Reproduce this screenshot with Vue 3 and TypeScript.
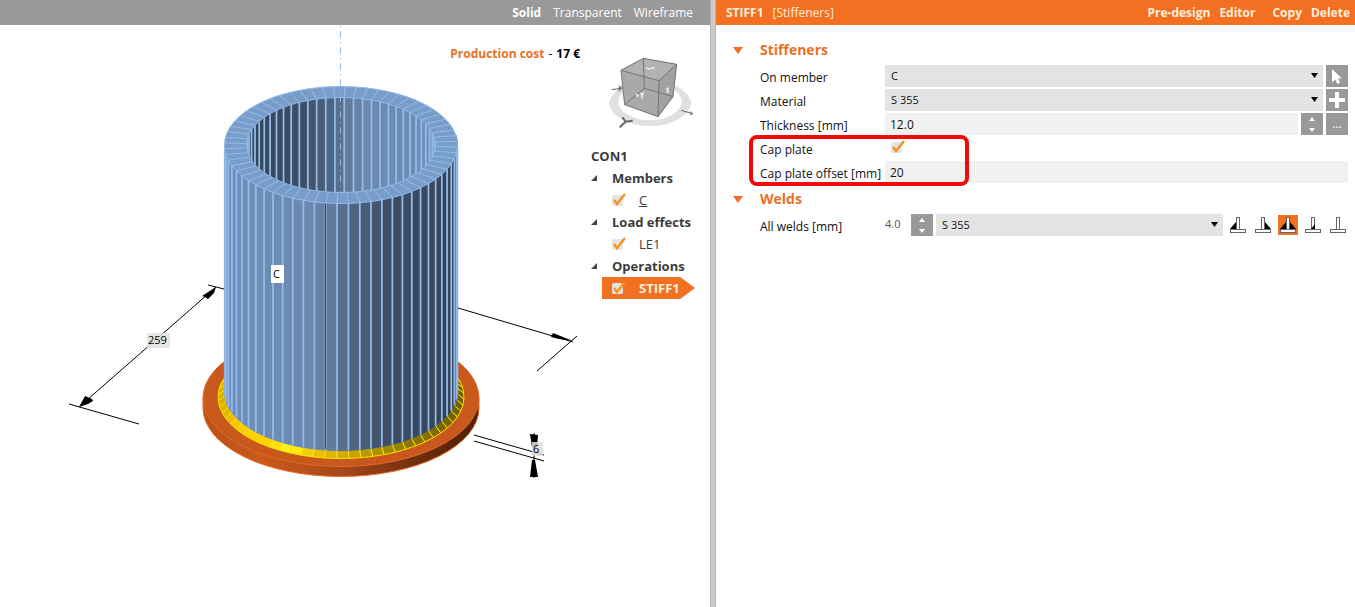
<script setup lang="ts">
import { ref } from 'vue'

type Rgb = [number, number, number]
type Stop = [number, Rgb]

const TAU = Math.PI * 2
const SEGMENTS = 64
const PHASE = -0.034
const CX = 341

const outerTop = { rx: 116.5, ry: 58.5, cy: 145 }
const innerTop = { rx: 94.5, ry: 47.5, cy: 145 }
const outerBottom = { rx: 116.5, ry: 58.5, cy: 392 }
const weldOuter = { rx: 123, ry: 61.5, cy: 397 }

const steel: Stop[] = [
  [-1, [108, 143, 186]],
  [-0.3, [108, 138, 176]],
  [-0.08, [98, 123, 156]],
  [0.1, [79, 101, 130]],
  [0.4, [62, 79, 101]],
  [1, [50, 65, 86]],
]
const weldTone: Stop[] = [
  [-1, [214, 176, 0]],
  [-0.85, [250, 204, 0]],
  [-0.6, [255, 212, 0]],
  [-0.42, [255, 250, 32]],
  [-0.25, [240, 200, 8]],
  [0, [212, 172, 0]],
  [0.3, [172, 146, 0]],
  [0.6, [138, 118, 0]],
  [1, [110, 94, 0]],
]

function tone(stops: Stop[], t: number): string {
  let i = 0
  while (i < stops.length - 2 && t > stops[i + 1][0]) i++
  const [a, ca] = stops[i]
  const [b, cb] = stops[i + 1]
  const k = Math.min(1, Math.max(0, (t - a) / (b - a)))
  return `rgb(${ca.map((c, n) => Math.round(c + (cb[n] - c) * k)).join(',')})`
}

type Ring = { rx: number; ry: number; cy: number }
const at = (r: Ring, a: number) => ({ x: CX + r.rx * Math.sin(a), y: r.cy + r.ry * Math.cos(a) })
const fmt = (p: { x: number; y: number }) => `${p.x.toFixed(1)},${p.y.toFixed(1)}`

const angles = Array.from({ length: SEGMENTS }, (_, k) => PHASE + (k * TAU) / SEGMENTS)

const frontFaces = angles
  .filter((a) => Math.cos(a) > -0.12)
  .map((a) => {
    const b = a + TAU / SEGMENTS
    const p = [at(outerTop, a), at(outerTop, b), at(outerBottom, b), at(outerBottom, a)]
    return { points: p.map(fmt).join(' '), fill: tone(steel, Math.sin((a + b) / 2)) }
  })
const frontLines = angles
  .filter((a) => Math.cos(a) > 0)
  .map((a) => ({ x: at(outerTop, a).x, y1: at(outerTop, a).y, y2: at(outerBottom, a).y }))

const backFaces = angles
  .filter((a) => Math.cos(a) < 0.12)
  .map((a) => {
    const b = a + TAU / SEGMENTS
    const p = [at(innerTop, a), at(innerTop, b)]
    return {
      points: `${fmt(p[0])} ${fmt(p[1])} ${p[1].x.toFixed(1)},200 ${p[0].x.toFixed(1)},200`,
      fill: tone(steel, -Math.sin((a + b) / 2)),
    }
  })
const backLines = angles.filter((a) => Math.cos(a) < 0).map((a) => at(innerTop, a))

const rimLines = angles.map((a) => ({ a: at(outerTop, a), b: at(innerTop, a) }))

const weldFaces = angles
  .filter((a) => Math.cos(a) > -0.35)
  .map((a) => {
    const b = a + TAU / SEGMENTS
    const p = [at(weldOuter, a), at(weldOuter, b), at(outerBottom, b), at(outerBottom, a)]
    return { points: p.map(fmt).join(' '), fill: tone(weldTone, Math.sin((a + b) / 2)) }
  })

const viewModes = ['Solid', 'Transparent', 'Wireframe']
const viewMode = ref('Solid')

const tree = ref([
  { title: 'Members', item: 'C', on: true, underline: true, active: false },
  { title: 'Load effects', item: 'LE1', on: true, underline: false, active: false },
  { title: 'Operations', item: 'STIFF1', on: true, underline: false, active: true },
])

const member = ref('C')
const material = ref('S 355')
const thickness = ref('12.0')
const capPlate = ref(true)
const capOffset = ref('20')
const weldSize = ref('4.0')
const weldMaterial = ref('S 355')

const weldTypes = [
  { name: 'Fillet left', shapes: ['8,7 8,14 2,14'] },
  { name: 'Fillet right', shapes: ['12,7 12,14 18,14'] },
  { name: 'Fillet both sides', shapes: ['8,7 8,14 2,14', '12,7 12,14 18,14'] },
  { name: 'Bevel', shapes: ['12,9 12,14 8,14'] },
  { name: 'Butt', shapes: [] },
]
const weldType = ref(2)

function step(target: 'thickness' | 'weld', delta: number) {
  const model = target === 'thickness' ? thickness : weldSize
  model.value = (Number(model.value) + delta).toFixed(1)
}
</script>

<template>
  <div class="app">
    <section class="scene">
      <nav class="bar modes">
        <button
          v-for="mode in viewModes"
          :key="mode"
          type="button"
          :class="{ current: mode === viewMode }"
          @click="viewMode = mode"
        >{{ mode }}</button>
      </nav>

      <div class="viewport">
        <svg class="model" viewBox="0 25 710 582" preserveAspectRatio="xMidYMin meet">
          <defs>
            <linearGradient id="plateSide" x1="0" x2="1" y1="0" y2="0">
              <stop offset="0" stop-color="#b9501a" />
              <stop offset="0.22" stop-color="#cb5a1c" />
              <stop offset="0.5" stop-color="#a6481a" />
              <stop offset="0.8" stop-color="#6b2c0c" />
              <stop offset="1" stop-color="#4d1e06" />
            </linearGradient>
            <clipPath id="bore"><ellipse cx="341" cy="145" rx="94.5" ry="47.5" /></clipPath>
          </defs>

          <!-- base plate -->
          <path d="M203 398v10a138 68.500 0 0 0 276 0v-10z" fill="url(#plateSide)" stroke="#ea6824" />
          <ellipse cx="341" cy="398" rx="138" ry="68.500" fill="#c8581c" stroke="#e56724" />

          <!-- weld bead -->
          <polygon v-for="(f, i) in weldFaces" :key="'w' + i" :points="f.points" :fill="f.fill" stroke="#ffe000" />

          <!-- tube shell -->
          <polygon v-for="(f, i) in frontFaces" :key="'f' + i" :points="f.points" :fill="f.fill" :stroke="f.fill" />
          <line
            v-for="(l, i) in frontLines" :key="'fl' + i"
            :x1="l.x" :x2="l.x" :y1="l.y1" :y2="l.y2" stroke="#93bae9" stroke-width="1.800"
          />
          <path d="M325.500 202V449" stroke="#2f4a68" />
          <path d="M224.500 145V393M457.500 145V393" stroke="#8db4e4" />

          <!-- rim and bore -->
          <ellipse cx="341" cy="145" rx="116.500" ry="58.500" fill="#789dc9" stroke="#93bae9" />
          <line
            v-for="(l, i) in rimLines" :key="'r' + i"
            :x1="l.a.x" :y1="l.a.y" :x2="l.b.x" :y2="l.b.y" stroke="#93bae9"
          />
          <g clip-path="url(#bore)">
            <polygon v-for="(f, i) in backFaces" :key="'b' + i" :points="f.points" :fill="f.fill" :stroke="f.fill" />
            <line
              v-for="(p, i) in backLines" :key="'bl' + i"
              :x1="p.x" :x2="p.x" :y1="p.y" y2="200" stroke="#93bae9" stroke-width="1.800"
            />
          </g>
          <ellipse cx="341" cy="145" rx="94.500" ry="47.500" fill="none" stroke="#93bae9" />
          <path d="M340.500 25V192" stroke="#93b7de" stroke-dasharray="7 4 1 4" stroke-dashoffset="10" />

          <!-- dimensions -->
          <g stroke="#000" fill="#000">
            <path d="M79 407L216 287M208 285l16 4M69 404l70 20M458 308l115 34M577 336l-40 35M474 435l70 20M474 441l70 20M534 433v45" fill="none" />
            <path d="M79 407l6-11 7 3 1 2-5 3zM216 287l-14 9 3 1 3 2 6-6zM573 341l-20-8-2 4 8 2zM530 434l8 1-1 12h-5zM532 460h3l3 17h-8z" stroke="none" />
          </g>
          <rect x="147" y="333" width="23" height="15" fill="#e2e2e2" fill-opacity="0.850" />
          <text x="148" y="344" class="dim">259</text>
          <rect x="532" y="442" width="11" height="14" fill="#dedede" fill-opacity="0.850" />
          <text x="533" y="453" class="dim">6</text>
          <rect x="271" y="265" width="13" height="18" fill="#fff" />
          <text x="273" y="278" class="dim">C</text>
        </svg>

        <p class="cost"><b>Production cost</b><span>-</span><strong>17 €</strong></p>

        <svg class="cube" viewBox="528 168 270 228">
          <path fill="#e0e0e0" fill-rule="evenodd" d="M537 310a124 75 0 0 0 247 0a124 75 0 0 0-247 0zM565 305a95 56 0 0 0 190 0a95 56 0 0 0-190 0z" />
          <path d="M640 175L740 193 729 290 684 350 584 314 573 211z" fill="#a9a9a9" />
          <path d="M687 242L740 193 729 290 684 350z" fill="#a2a2a2" />
          <path d="M573 211L640 175 740 193 687 242z" fill="#b2b2b2" />
          <path
            d="M640 175L740 193 687 242 573 211zM573 211L584 314 684 350 687 242M684 350L729 290 740 193M640 175L643 265 584 314M643 265L729 290"
            fill="none" stroke="#747474" stroke-width="3"
          />
          <path d="M648 203l8 4M655 207l6-1M664 206l4-3 6 1M618 283l8 5M621 290l4-5M632 278l4 8 5-8M636 286v12M716 263l-6 4 5 5-1 5-5-1" fill="none" stroke="#fff" stroke-width="3.500" />
          <g fill="none" stroke="#6a6a6a">
            <path d="M545 269l34-5M567 257l4 16M574 258l-9 16" stroke-width="3" />
            <path d="M569 382l18-17 21-3M577 352l10 13" stroke-width="6" />
            <path d="M753 331l35 10M788 341l-9-6M788 341l-8 3" stroke-width="3" />
          </g>
        </svg>

        <aside class="tree">
          <h2>CON1</h2>
          <template v-for="group in tree" :key="group.title">
            <h3>
              <svg viewBox="0 0 6 6" width="6" height="6"><path d="M6 0V6H0z" fill="#444" /></svg>
              {{ group.title }}
            </h3>
            <label class="leaf" :class="{ active: group.active }">
              <span class="tick">
                <input v-model="group.on" type="checkbox" />
                <svg v-if="group.on" viewBox="0 0 14 14"><path d="M2 7L5 11 13 1" /></svg>
              </span>
              <span :class="{ under: group.underline }">{{ group.item }}</span>
            </label>
          </template>
        </aside>
      </div>
    </section>

    <div class="splitter"></div>

    <section class="props">
      <header class="bar title">
        <b>STIFF1</b>
        <span class="kind">[Stiffeners]</span>
        <button type="button">Pre-design</button>
        <button type="button">Editor</button>
        <button type="button" class="apart">Copy</button>
        <button type="button">Delete</button>
      </header>

      <form class="form" @submit.prevent>
        <h2>
          <svg viewBox="0 0 10 7" width="10" height="7"><path d="M0 0H10L5 7z" fill="#f26f21" /></svg>
          Stiffeners
        </h2>
        <div class="row">
          <label for="member">On member</label>
          <div class="field">
            <div class="pick">
              <select id="member" v-model="member"><option>C</option></select>
              <svg viewBox="0 0 7 5"><path d="M0 0H7L3.500 5z" /></svg>
            </div>
            <button type="button" class="tool" aria-label="Select in scene">
              <svg viewBox="0 0 22 22"><path d="M6 4V17.500L9.200 14.500 11.500 19 14 17.800 12 13.500H16z" fill="#fff" /></svg>
            </button>
          </div>
        </div>
        <div class="row">
          <label for="material">Material</label>
          <div class="field">
            <div class="pick">
              <select id="material" v-model="material"><option>S 355</option></select>
              <svg viewBox="0 0 7 5"><path d="M0 0H7L3.500 5z" /></svg>
            </div>
            <button type="button" class="tool" aria-label="Add material">
              <svg viewBox="0 0 22 22"><path d="M11 3V19M3 11H19" stroke="#fff" stroke-width="4" /></svg>
            </button>
          </div>
        </div>
        <div class="row">
          <label for="thickness">Thickness [mm]</label>
          <div class="field">
            <input id="thickness" v-model="thickness" type="text" class="text" />
            <div class="spin">
              <button type="button" aria-label="Increase thickness" @click="step('thickness', 1)"><svg viewBox="0 0 6 4"><path d="M3 0L6 4H0z" /></svg></button>
              <button type="button" aria-label="Decrease thickness" @click="step('thickness', -1)"><svg viewBox="0 0 6 4"><path d="M0 0H6L3 4z" /></svg></button>
            </div>
            <button type="button" class="tool" aria-label="More">...</button>
          </div>
        </div>
        <div class="marked">
          <div class="row">
            <label for="cap">Cap plate</label>
            <div class="field">
              <span class="tick cap">
                <input id="cap" v-model="capPlate" type="checkbox" />
                <svg v-if="capPlate" viewBox="0 0 14 14"><path d="M2 7L5 11 13 1" /></svg>
              </span>
            </div>
          </div>
          <div class="row">
            <label for="offset">Cap plate offset [mm]</label>
            <div class="field"><input id="offset" v-model="capOffset" type="text" class="text" /></div>
          </div>
        </div>

        <h2 class="next">
          <svg viewBox="0 0 10 7" width="10" height="7"><path d="M0 0H10L5 7z" fill="#f26f21" /></svg>
          Welds
        </h2>
        <div class="row">
          <label for="weld">All welds [mm]</label>
          <div class="field">
            <input id="weld" v-model="weldSize" type="text" class="size" />
            <div class="spin">
              <button type="button" aria-label="Increase weld size" @click="step('weld', 1)"><svg viewBox="0 0 6 4"><path d="M3 0L6 4H0z" /></svg></button>
              <button type="button" aria-label="Decrease weld size" @click="step('weld', -1)"><svg viewBox="0 0 6 4"><path d="M0 0H6L3 4z" /></svg></button>
            </div>
            <div class="pick">
              <select v-model="weldMaterial" aria-label="Weld material"><option>S 355</option></select>
              <svg viewBox="0 0 7 5"><path d="M0 0H7L3.500 5z" /></svg>
            </div>
            <div class="welds">
              <button
                v-for="(w, i) in weldTypes" :key="w.name"
                type="button" :aria-label="w.name" :class="{ on: i === weldType }"
                @click="weldType = i"
              >
                <svg viewBox="0 0 20 20">
                  <rect x="8.500" y="2.500" width="3" height="12" fill="#fff" stroke="#666" />
                  <polygon v-for="s in w.shapes" :key="s" :points="s" />
                  <rect x="2.500" y="14.500" width="15" height="3" fill="#fff" stroke="#666" />
                </svg>
              </button>
            </div>
          </div>
        </div>
      </form>
    </section>
  </div>
</template>

<style>
body {
  background: #fff;
}
</style>

<style scoped>
.app {
  display: flex;
  min-height: 100vh;
  font: 12px/16px "Open Sans", "Noto Sans", sans-serif;
  color: #111;
}
.app *,
.app *::after {
  box-sizing: border-box;
}
button,
input,
select {
  font: inherit;
  color: inherit;
  border: 0;
  border-radius: 0;
  margin: 0;
  padding: 0;
  background: none;
}
h2,
h3,
p {
  margin: 0;
}
.scene {
  flex: 710 1 0;
  min-width: 0;
  display: flex;
  flex-direction: column;
}
.splitter {
  flex: 0 0 6px;
  background: #cbcbcb;
  border: solid #b4b4b4;
  border-width: 0 1px;
}
.props {
  flex: 639 1 0;
  min-width: 0;
}
.bar {
  display: flex;
  align-items: center;
  height: 25px;
  padding-top: 1px;
  color: #fff;
}
.modes {
  justify-content: flex-end;
  gap: 12px;
  padding-right: 17px;
  background: #999;
}
.modes .current {
  font-weight: 700;
}
.title {
  gap: 9px;
  padding-right: 5px;
  padding-left: 10px;
  background: #f36f21;
  color: #fff0dc;
}
.title button {
  font-weight: 700;
}
.kind {
  margin-right: auto;
}
.apart {
  margin-left: 8px;
}
.viewport {
  position: relative;
  flex: 1;
}
.model {
  display: block;
  width: 100%;
}
.dim {
  font: 11px "Open Sans", sans-serif;
}
.cost {
  position: absolute;
  top: 21px;
  right: 130px;
  display: flex;
  gap: 4px;
  color: #000;
}
.cost b {
  color: #e97025;
}
.cube {
  position: absolute;
  top: 31px;
  right: 14px;
  width: 90px;
  height: 76px;
}
.tree {
  position: absolute;
  top: 120px;
  right: 15px;
  width: 104px;
  font-size: 13px;
  line-height: 22px;
  color: #3c3c3c;
}
.tree h2,
.tree h3 {
  font-size: 13px;
  font-weight: 700;
}
.tree h3 {
  display: flex;
  align-items: center;
  gap: 15px;
  white-space: nowrap;
}
.leaf {
  display: flex;
  align-items: center;
  gap: 13px;
  margin-left: 11px;
  padding-left: 10px;
  height: 22px;
}
.leaf.active {
  background: #f36f21;
  color: #fff0dc;
  font-weight: 700;
  clip-path: polygon(0 0, 84% 0, 100% 50%, 84% 100%, 0 100%);
}
.under {
  text-decoration: underline;
}
.tick {
  position: relative;
  display: block;
  width: 14px;
  height: 14px;
}
.tick input {
  appearance: none;
  display: block;
  width: 11px;
  height: 11px;
  margin-top: 2px;
  border-radius: 2px;
  background: #e3e3e3;
}
.tick svg {
  position: absolute;
  inset: 0;
  fill: none;
  stroke: #f7941d;
  stroke-width: 2.5px;
  pointer-events: none;
}
.form {
  padding: 13px 7px 13px 17px;
}
.form h2 {
  display: flex;
  align-items: center;
  gap: 17px;
  height: 24px;
  margin-bottom: 3px;
  font-size: 14px;
  font-weight: 700;
  color: #e97025;
}
.form .next {
  margin-top: 4px;
}
.row {
  display: grid;
  grid-template-columns: 125px 1fr;
  align-items: center;
  height: 22px;
  margin-bottom: 2px;
  padding-left: 27px;
}
.row label {
  padding-top: 3px;
  white-space: nowrap;
}
.field {
  display: flex;
  gap: 3px;
  height: 22px;
}
.pick {
  position: relative;
  flex: 1;
}
.pick select {
  appearance: none;
  display: block;
  width: 100%;
  height: 22px;
  padding: 0 20px 0 6px;
  background: #e4e4e4;
  font-size: 11px;
}
.pick svg {
  position: absolute;
  right: 5px;
  top: 8px;
  width: 7px;
  height: 5px;
  pointer-events: none;
}
.text {
  flex: 1;
  min-width: 0;
  padding: 2px 5px 0;
  background: #f1f1f1;
}
.size {
  width: 23px;
  height: 18px;
  font-size: 11px;
  color: #555;
}
.tool {
  flex: 0 0 22px;
  background: #999;
  color: #fff;
}
.tool svg {
  display: block;
  width: 22px;
  height: 22px;
}
.spin {
  flex: 0 0 22px;
  display: flex;
  flex-direction: column;
  background: #999;
}
.spin button {
  flex: 1;
  display: flex;
  align-items: center;
  justify-content: center;
}
.spin svg {
  width: 6px;
  height: 4px;
  fill: #fff;
}
.marked {
  position: relative;
}
.marked::after {
  content: "";
  position: absolute;
  left: 16px;
  top: -2px;
  width: 220px;
  height: 51px;
  border: 4px solid #f20a0a;
  border-radius: 8px;
  pointer-events: none;
}
.cap {
  margin: 3px 0 0 6px;
}
.welds {
  display: flex;
  align-items: center;
  gap: 5px;
  padding-left: 2px;
}
.welds button {
  width: 20px;
  height: 20px;
}
.welds svg {
  display: block;
}
.welds .on {
  background: #f36f21;
}
</style>
